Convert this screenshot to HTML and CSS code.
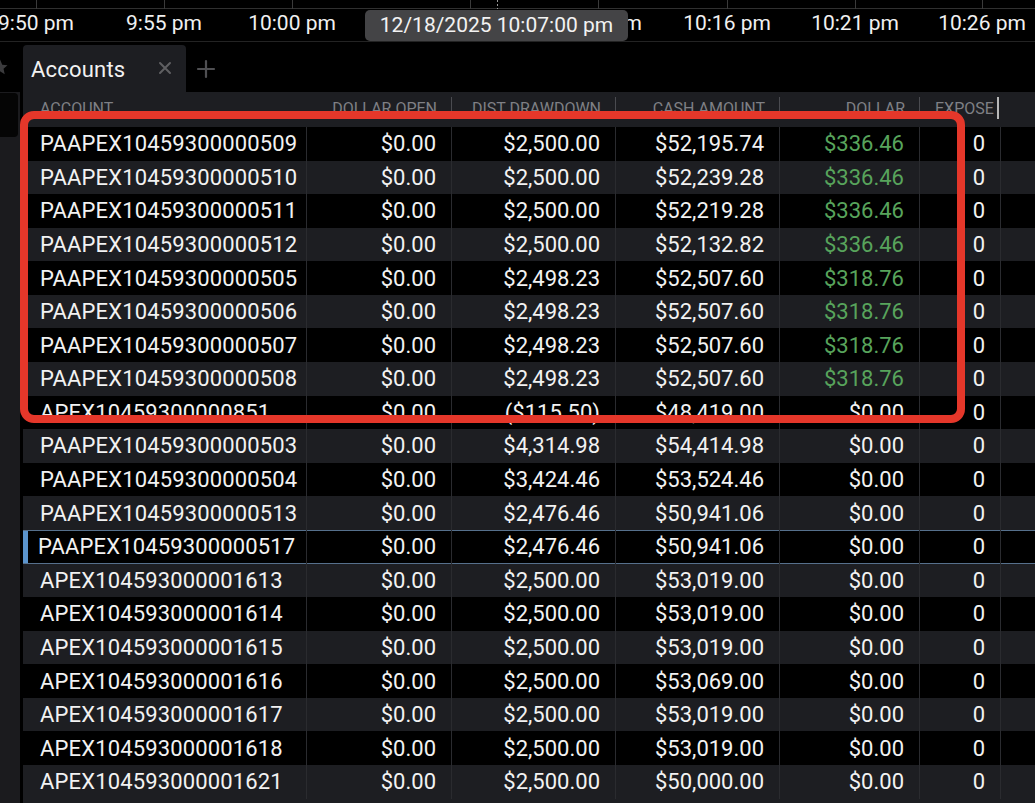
FILE: index.html
```html
<!DOCTYPE html>
<html lang="en">
<head>
<meta charset="utf-8">
<title>Accounts</title>
<link rel="stylesheet" href="styles.css">
</head>
<body>
<div class="timeline">
  <div class="axis-line"></div>
  <span class="tick" style="left:36px"></span>
  <span class="tick" style="left:164px"></span>
  <span class="tick" style="left:292px"></span>
  <span class="tick" style="left:470px"></span>
  <span class="tick cursor" style="left:497px"></span>
  <span class="tick" style="left:598px"></span>
  <span class="tick" style="left:727px"></span>
  <span class="tick" style="left:855px"></span>
  <span class="tick" style="left:982px"></span>
  <span class="tlabel" style="left:36px">9:50 pm</span>
  <span class="tlabel" style="left:164px">9:55 pm</span>
  <span class="tlabel" style="left:292px">10:00 pm</span>
  <span class="tlabel" style="left:598px">10:11 pm</span>
  <span class="tlabel" style="left:727px">10:16 pm</span>
  <span class="tlabel" style="left:855px">10:21 pm</span>
  <span class="tlabel" style="left:982px">10:26 pm</span>
  <div class="tooltip">12/18/2025 10:07:00 pm</div>
</div>

<div class="tabbar">
  <svg class="star" width="18" height="18" viewBox="0 0 24 24"><path d="M12 2l3 7 7 .6-5.3 4.7 1.6 7.2L12 17.8 5.7 21.5l1.6-7.2L2 9.6 9 9z" fill="#3b3b3d"/></svg>
  <div class="tab">
    <span class="tab-title">Accounts</span>
    <svg class="tab-close" width="14" height="14" viewBox="0 0 14 14"><path d="M2 2L12 12M12 2L2 12" stroke="#5f5f62" stroke-width="2" stroke-linecap="round"/></svg>
  </div>
  <svg class="tab-add" width="20" height="20" viewBox="0 0 20 20"><path d="M10 2V18M2 10H18" stroke="#4f4f52" stroke-width="2.2" stroke-linecap="round"/></svg>
</div>

<div class="main">
  <div class="side"><div class="side-box"></div></div>
  <div class="table">
    <div class="head">
      <span class="h acct">ACCOUNT</span>
      <span class="h num sep">DOLLAR OPEN</span>
      <span class="h num sep">DIST DRAWDOWN</span>
      <span class="h num sep">CASH AMOUNT</span>
      <span class="h num sep">DOLLAR</span>
      <span class="h sep bright">EXPOSE</span>
      <span class="h"></span>
    </div>

    <div class="row"><span class="c acct">PAAPEX10459300000509</span><span class="c num">$0.00</span><span class="c num">$2,500.00</span><span class="c num">$52,195.74</span><span class="c num pos">$336.46</span><span class="c num">0</span><span class="c fill"></span></div>
    <div class="row"><span class="c acct">PAAPEX10459300000510</span><span class="c num">$0.00</span><span class="c num">$2,500.00</span><span class="c num">$52,239.28</span><span class="c num pos">$336.46</span><span class="c num">0</span><span class="c fill"></span></div>
    <div class="row"><span class="c acct">PAAPEX10459300000511</span><span class="c num">$0.00</span><span class="c num">$2,500.00</span><span class="c num">$52,219.28</span><span class="c num pos">$336.46</span><span class="c num">0</span><span class="c fill"></span></div>
    <div class="row"><span class="c acct">PAAPEX10459300000512</span><span class="c num">$0.00</span><span class="c num">$2,500.00</span><span class="c num">$52,132.82</span><span class="c num pos">$336.46</span><span class="c num">0</span><span class="c fill"></span></div>
    <div class="row"><span class="c acct">PAAPEX10459300000505</span><span class="c num">$0.00</span><span class="c num">$2,498.23</span><span class="c num">$52,507.60</span><span class="c num pos">$318.76</span><span class="c num">0</span><span class="c fill"></span></div>
    <div class="row"><span class="c acct">PAAPEX10459300000506</span><span class="c num">$0.00</span><span class="c num">$2,498.23</span><span class="c num">$52,507.60</span><span class="c num pos">$318.76</span><span class="c num">0</span><span class="c fill"></span></div>
    <div class="row"><span class="c acct">PAAPEX10459300000507</span><span class="c num">$0.00</span><span class="c num">$2,498.23</span><span class="c num">$52,507.60</span><span class="c num pos">$318.76</span><span class="c num">0</span><span class="c fill"></span></div>
    <div class="row"><span class="c acct">PAAPEX10459300000508</span><span class="c num">$0.00</span><span class="c num">$2,498.23</span><span class="c num">$52,507.60</span><span class="c num pos">$318.76</span><span class="c num">0</span><span class="c fill"></span></div>
    <div class="row"><span class="c acct">APEX10459300000851</span><span class="c num">$0.00</span><span class="c num">($115.50)</span><span class="c num">$48,419.00</span><span class="c num">$0.00</span><span class="c num">0</span><span class="c fill"></span></div>
    <div class="row"><span class="c acct">PAAPEX10459300000503</span><span class="c num">$0.00</span><span class="c num">$4,314.98</span><span class="c num">$54,414.98</span><span class="c num">$0.00</span><span class="c num">0</span><span class="c fill"></span></div>
    <div class="row"><span class="c acct">PAAPEX10459300000504</span><span class="c num">$0.00</span><span class="c num">$3,424.46</span><span class="c num">$53,524.46</span><span class="c num">$0.00</span><span class="c num">0</span><span class="c fill"></span></div>
    <div class="row"><span class="c acct">PAAPEX10459300000513</span><span class="c num">$0.00</span><span class="c num">$2,476.46</span><span class="c num">$50,941.06</span><span class="c num">$0.00</span><span class="c num">0</span><span class="c fill"></span></div>
    <div class="row selected"><span class="c acct">PAAPEX10459300000517</span><span class="c num">$0.00</span><span class="c num">$2,476.46</span><span class="c num">$50,941.06</span><span class="c num">$0.00</span><span class="c num">0</span><span class="c fill"></span></div>
    <div class="row"><span class="c acct">APEX104593000001613</span><span class="c num">$0.00</span><span class="c num">$2,500.00</span><span class="c num">$53,019.00</span><span class="c num">$0.00</span><span class="c num">0</span><span class="c fill"></span></div>
    <div class="row"><span class="c acct">APEX104593000001614</span><span class="c num">$0.00</span><span class="c num">$2,500.00</span><span class="c num">$53,019.00</span><span class="c num">$0.00</span><span class="c num">0</span><span class="c fill"></span></div>
    <div class="row"><span class="c acct">APEX104593000001615</span><span class="c num">$0.00</span><span class="c num">$2,500.00</span><span class="c num">$53,019.00</span><span class="c num">$0.00</span><span class="c num">0</span><span class="c fill"></span></div>
    <div class="row"><span class="c acct">APEX104593000001616</span><span class="c num">$0.00</span><span class="c num">$2,500.00</span><span class="c num">$53,069.00</span><span class="c num">$0.00</span><span class="c num">0</span><span class="c fill"></span></div>
    <div class="row"><span class="c acct">APEX104593000001617</span><span class="c num">$0.00</span><span class="c num">$2,500.00</span><span class="c num">$53,019.00</span><span class="c num">$0.00</span><span class="c num">0</span><span class="c fill"></span></div>
    <div class="row"><span class="c acct">APEX104593000001618</span><span class="c num">$0.00</span><span class="c num">$2,500.00</span><span class="c num">$53,019.00</span><span class="c num">$0.00</span><span class="c num">0</span><span class="c fill"></span></div>
    <div class="row"><span class="c acct">APEX104593000001621</span><span class="c num">$0.00</span><span class="c num">$2,500.00</span><span class="c num">$50,000.00</span><span class="c num">$0.00</span><span class="c num">0</span><span class="c fill"></span></div>
  </div>
</div>

<div class="highlight"></div>
</body>
</html>
```

FILE: styles.css
```css
* { box-sizing: border-box; }

html, body {
  margin: 0;
  padding: 0;
  background: #000;
  height: 803px;
  overflow: hidden;
}

body {
  font-family: Roboto, "Liberation Sans", sans-serif;
  color: #f2f2f2;
  position: relative;
}

/* ---------- timeline axis ---------- */
.timeline {
  position: relative;
  height: 42px;
  border-bottom: 1px solid #232323;
  overflow: hidden;
}

.axis-line {
  position: absolute;
  left: 0;
  right: 0;
  top: 8px;
  height: 1px;
  background: #303030;
}

.tick {
  position: absolute;
  top: 0;
  width: 1px;
  height: 9px;
  background: #3a3a3a;
}

.tick.cursor {
  background: repeating-linear-gradient(#9a9a9a 0 2px, transparent 2px 4px);
}

.tlabel {
  position: absolute;
  top: 11px;
  transform: translateX(-50%);
  font-size: 21px;
  line-height: 24px;
  color: #f0f0f0;
  white-space: nowrap;
}

.tooltip {
  position: absolute;
  left: 365px;
  top: 10px;
  width: 263px;
  height: 31px;
  background: #444446;
  border-radius: 5px;
  color: #f2f2f2;
  font-size: 21px;
  line-height: 31px;
  text-align: center;
  white-space: nowrap;
}

/* ---------- tab bar ---------- */
.tabbar {
  height: 50px;
  display: flex;
  align-items: flex-end;
}

.star {
  margin-left: -9px;
  margin-right: 14px;
  align-self: center;
  flex: none;
}

.tab {
  width: 163px;
  height: 47px;
  background: #1d1e22;
  border-radius: 4px 4px 0 0;
  display: flex;
  align-items: center;
  padding-left: 8px;
  padding-right: 14px;
  justify-content: space-between;
}

.tab-title {
  font-size: 22px;
  letter-spacing: 0.2px;
  color: #f2f2f2;
  margin-top: 1px;
}

.tab-close {
  margin-top: -1px;
}

.tab-add {
  align-self: center;
  margin-left: 10px;
  margin-top: 4px;
}

/* ---------- main area ---------- */
.main {
  display: flex;
  gap: 3px;
  height: 711px;
}

.side {
  width: 20px;
  background: #1b1b1e;
  flex: none;
}

.side-box {
  width: 18px;
  height: 44px;
  margin-top: 1px;
  background: #050505;
  border-radius: 0 4px 4px 0;
}

.table {
  flex: 1;
  background: #1d1e22;
  overflow: hidden;
}

.head,
.row {
  display: grid;
  grid-template-columns: 284px 145px 164px 164px 140px 81px 1fr;
}

.head {
  height: 35px;
}

.h {
  position: relative;
  font-size: 16px;
  line-height: 20px;
  padding: 7px 15px 0 15px;
  color: #7f8085;
  white-space: nowrap;
  overflow: hidden;
}

.h.acct { padding-left: 17px; }
.h.num { text-align: right; }

.h.sep::after {
  content: "";
  position: absolute;
  right: 0;
  top: 5px;
  height: 22px;
  width: 1px;
  background: #4a4b50;
}

.h.bright::after {
  right: 2px;
  width: 2px;
  background: #b8b8b8;
}

.row {
  height: 33.58px;
  background: #000;
}

.row:nth-child(odd) {
  background: #1d1e22;
}

.row.selected {
  box-shadow: inset 0 1px 0 #56708c, inset 0 -1px 0 #56708c, inset 5px 0 0 #5b94cc;
}

.row.selected .acct {
  padding-left: 15px;
}

.c {
  display: flex;
  align-items: center;
  border-right: 1px solid #2a2b2f;
  padding: 0 15px;
  font-size: 22px;
  white-space: nowrap;
  overflow: hidden;
  color: #f2f2f2;
}

.c.acct { padding-left: 17px; letter-spacing: 0.15px; }
.c.num { justify-content: flex-end; }
.c.pos { color: #58a45c; }
.c.fill { border-right: none; }

/* ---------- annotation box ---------- */
.highlight {
  position: absolute;
  left: 20px;
  top: 111px;
  width: 945px;
  height: 312px;
  border: 8px solid #e5372a;
  border-radius: 14px;
  pointer-events: none;
}
```
